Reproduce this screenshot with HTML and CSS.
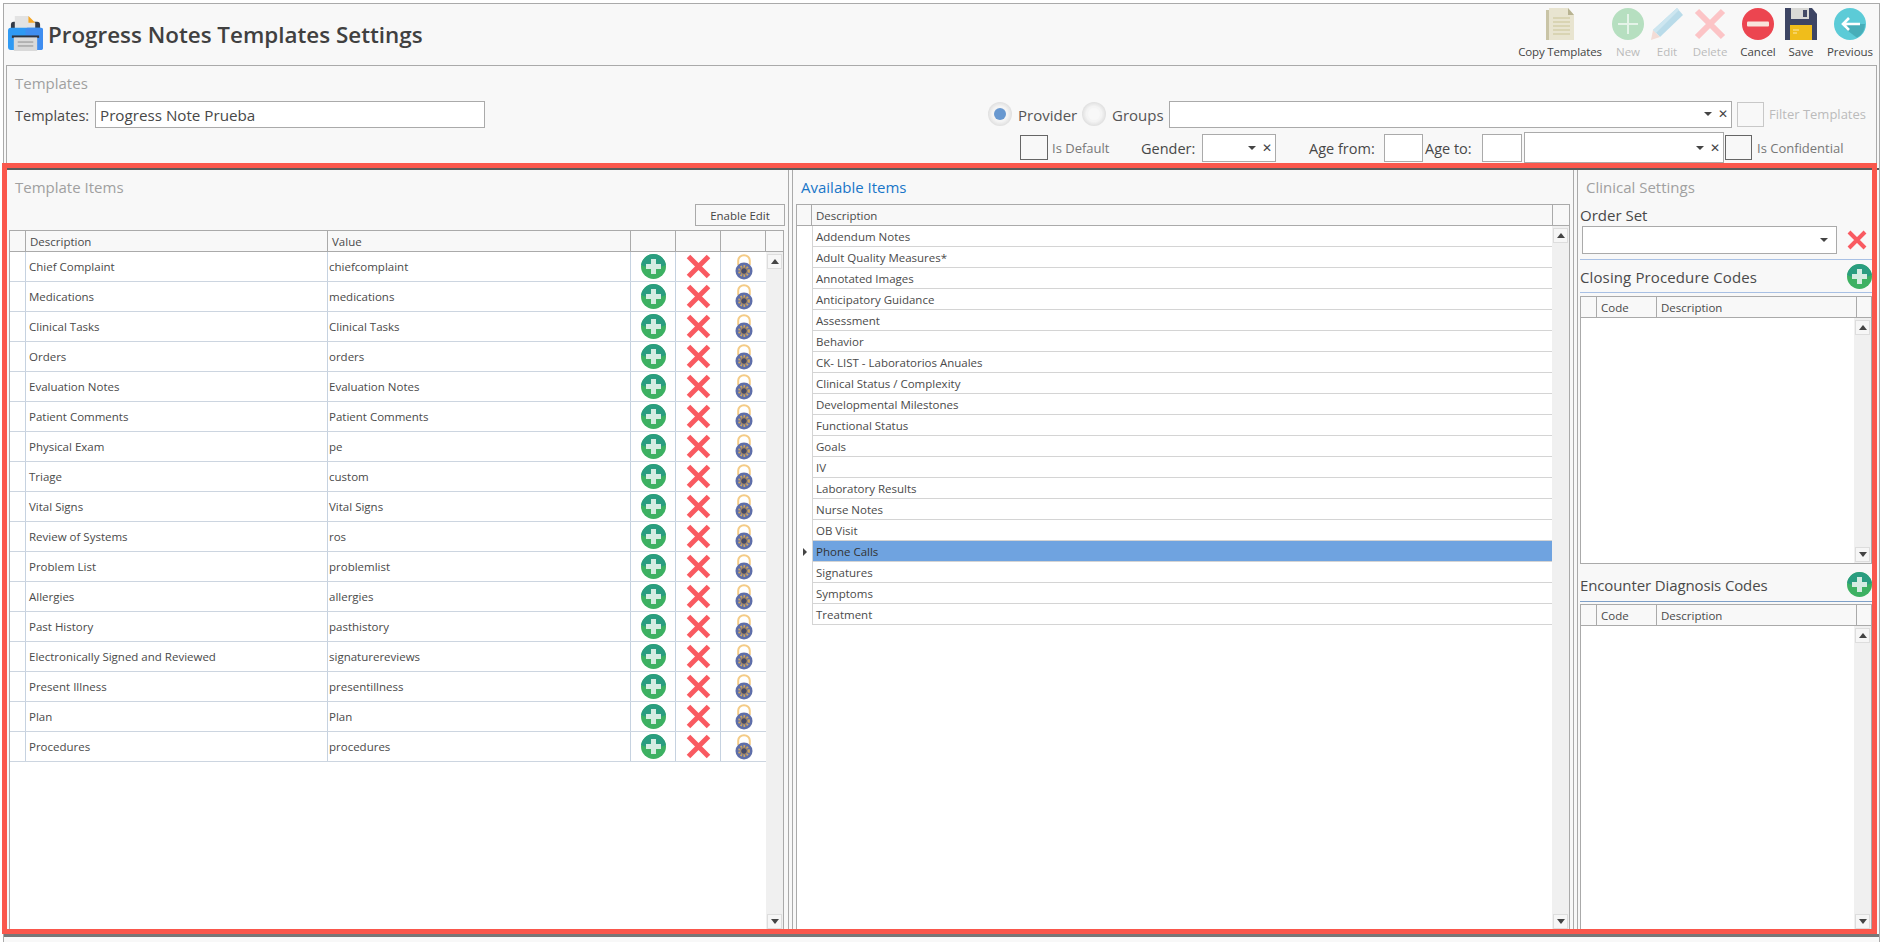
FILE: index.html
```html
<!DOCTYPE html>
<html lang="en">
<head>
<meta charset="utf-8">
<title>Progress Notes Templates Settings</title>
<link rel="stylesheet" href="styles.css">
</head>
<body>
<svg class="defs" width="0" height="0" aria-hidden="true">
  <defs>
    <symbol id="i-plus" viewBox="0 0 25 25">
      <circle cx="12.5" cy="12.5" r="12.5" fill="#3db162"/>
      <path d="M.1 11A12.5 12.5 0 0 1 24.9 11C20 14 5 14 .1 11Z" fill="#2a9d80"/>
      <path d="M10 5h5v5h5v5h-5v5h-5v-5H5v-5h5Z" fill="#d5ece2"/>
    </symbol>
    <symbol id="i-x" viewBox="0 0 25 25">
      <path d="M2.5 2.5 22.5 22.5M22.5 2.5 2.5 22.5" stroke="#f95a61" stroke-width="5" fill="none"/>
    </symbol>
    <symbol id="i-lock" viewBox="0 0 18 26">
      <path d="M3.2 11V6.5a5.8 5.3 0 0 1 11.6 0V11" fill="none" stroke="#f4cb86" stroke-width="2"/>
      <circle cx="9" cy="17" r="8.5" fill="#5e6ea9"/>
      <circle cx="9" cy="17" r="5" fill="none" stroke="#d1a75e" stroke-width="1.8" stroke-dasharray="1.8 1.4"/>
      <circle cx="9" cy="17" r="3.4" fill="#454b6b" stroke="#d9a85a" stroke-width=".8"/>
    </symbol>
  </defs>
</svg>

<div class="app">
  <header class="topbar">
    <div class="brand">
      <svg class="logo" viewBox="0 0 36 36">
        <path d="M3 14V9a3 3 0 0 1 3-3h24a3 3 0 0 1 3 3v5Z" fill="#333a46"/>
        <path d="M7 0h14l7 7v8H7Z" fill="#e3e3e3"/>
        <path d="M21 0l7 7h-7Z" fill="#f6a623"/>
        <rect x="0" y="12" width="36" height="23" rx="3" fill="#2f9af3"/>
        <rect x="18" y="12" width="18" height="23" rx="2" fill="#3f8df0"/>
        <rect x="4" y="20" width="28" height="2.5" fill="#2f3440"/>
        <rect x="6" y="22" width="24" height="14" fill="#d9d9d9"/>
        <rect x="10" y="26" width="16" height="1.6" fill="#a9a9a9"/>
        <rect x="10" y="30" width="16" height="1.6" fill="#a9a9a9"/>
      </svg>
      <h1 class="page-title">Progress Notes Templates Settings</h1>
    </div>
    <nav class="toolbar">
      <div class="tool tool-copy">
        <svg class="tool-icon" viewBox="0 0 32 32">
          <path d="M2 2h20v30H2Z" fill="#c9c4a6"/>
          <path d="M5 0h19l6 7v25H5Z" fill="#e8e4d0"/>
          <path d="M24 0l6 7h-6Z" fill="#b8b392"/>
          <path d="M9 10h17M9 14h17M9 18h17M9 22h17M9 26h17" stroke="#d3cea9" stroke-width="1.4"/>
        </svg>
        <span class="tool-label">Copy Templates</span>
      </div>
      <div class="tool tool-new tool-off">
        <svg class="tool-icon" viewBox="0 0 32 32">
          <circle cx="16" cy="16" r="16" fill="#b6dfc0"/>
          <path d="M16 6v20M6 16h20" stroke="#e4f3e8" stroke-width="2"/>
        </svg>
        <span class="tool-label">New</span>
      </div>
      <div class="tool tool-edit tool-off">
        <svg class="tool-icon" viewBox="0 0 32 32">
          <path d="M26 0l6 7L9 29 2 22Z" fill="#b9dbe9"/>
          <path d="M2 22l7 7-9 3Z" fill="#f3dcd6"/>
          <path d="M2 22 26 0l2 2L5 25Z" fill="#cde6f0"/>
        </svg>
        <span class="tool-label">Edit</span>
      </div>
      <div class="tool tool-delete tool-off">
        <svg class="tool-icon" viewBox="0 0 32 32">
          <path d="M3 3 29 29M29 3 3 29" stroke="#fcc4c6" stroke-width="6" fill="none"/>
        </svg>
        <span class="tool-label">Delete</span>
      </div>
      <div class="tool tool-cancel">
        <svg class="tool-icon" viewBox="0 0 32 32">
          <circle cx="16" cy="16" r="16" fill="#ec4550"/>
          <rect x="5" y="13.5" width="22" height="5" rx="1" fill="#f8e4dc"/>
        </svg>
        <span class="tool-label">Cancel</span>
      </div>
      <div class="tool tool-save">
        <svg class="tool-icon" viewBox="0 0 32 32">
          <path d="M0 0h27l5 6v26H0Z" fill="#3d4564"/>
          <path d="M6 0h18v11H6Z" fill="#d9d9d6"/>
          <rect x="18" y="2" width="4" height="7" fill="#444b66"/>
          <rect x="5" y="17" width="22" height="15" fill="#f0bd1b"/>
          <path d="M8 22h6M8 25h4" stroke="#fbe8a8" stroke-width="1.2"/>
        </svg>
        <span class="tool-label">Save</span>
      </div>
      <div class="tool tool-prev">
        <svg class="tool-icon" viewBox="0 0 32 32">
          <circle cx="16" cy="16" r="16" fill="#5ccbd7"/>
          <path d="M10 20 16 16h15a16 16 0 0 1-8 13.8Z" fill="#48aeb9"/>
          <path d="M26 16H9M15 10l-6 6 6 6" stroke="#fff" stroke-width="2.6" fill="none"/>
        </svg>
        <span class="tool-label">Previous</span>
      </div>
    </nav>
  </header>

  <section class="filters">
    <h2 class="group-title muted">Templates</h2>
    <div class="filter-row row-one">
      <label class="field-label tpl-label">Templates:</label>
      <div class="text-box tpl-name">Progress Note Prueba</div>
      <div class="row-spring"></div>
      <span class="radio radio-on"></span><span class="radio-text provider-text">Provider</span>
      <span class="radio radio-off"></span><span class="radio-text groups-text">Groups</span>
      <div class="combo combo-groups"><i class="caret"></i><i class="clear">✕</i></div>
      <span class="check check-light"></span>
      <span class="check-text filter-text">Filter Templates</span>
    </div>
    <div class="filter-row row-two">
      <div class="row-spring"></div>
      <span class="check check-dark check-wide"></span>
      <span class="check-text default-text">Is Default</span>
      <label class="field-label gender-label">Gender:</label>
      <div class="combo combo-gender"><i class="caret"></i><i class="clear">✕</i></div>
      <label class="field-label agefrom-label">Age from:</label>
      <div class="text-box age-from"></div>
      <label class="field-label ageto-label">Age to:</label>
      <div class="text-box age-to"></div>
      <div class="combo combo-age"><i class="caret"></i><i class="clear">✕</i></div>
      <span class="check check-dark"></span>
      <span class="check-text conf-text">Is Confidential</span>
    </div>
  </section>

  <main class="workspace">
    <section class="panel panel-items">
      <h2 class="group-title muted">Template Items</h2>
      <div class="button-row"><button class="btn" type="button">Enable Edit</button></div>
      <div class="grid grid-items">
        <div class="grid-head">
          <span class="hc hc-ind"></span><span class="hc hc-desc">Description</span><span class="hc hc-val">Value</span>
          <span class="hc hc-ic"></span><span class="hc hc-ic"></span><span class="hc hc-ic"></span><span class="hc hc-end"></span>
        </div>
        <div class="grid-body">
          <div class="rows">
            <div class="item-row"><span class="c-ind"></span><span class="c-desc">Chief Complaint</span><span class="c-val">chiefcomplaint</span><span class="c-ic"><svg class="ic-plus"><use href="#i-plus"/></svg></span><span class="c-ic"><svg class="ic-x"><use href="#i-x"/></svg></span><span class="c-ic"><svg class="ic-lock"><use href="#i-lock"/></svg></span></div>
            <div class="item-row"><span class="c-ind"></span><span class="c-desc">Medications</span><span class="c-val">medications</span><span class="c-ic"><svg class="ic-plus"><use href="#i-plus"/></svg></span><span class="c-ic"><svg class="ic-x"><use href="#i-x"/></svg></span><span class="c-ic"><svg class="ic-lock"><use href="#i-lock"/></svg></span></div>
            <div class="item-row"><span class="c-ind"></span><span class="c-desc">Clinical Tasks</span><span class="c-val">Clinical Tasks</span><span class="c-ic"><svg class="ic-plus"><use href="#i-plus"/></svg></span><span class="c-ic"><svg class="ic-x"><use href="#i-x"/></svg></span><span class="c-ic"><svg class="ic-lock"><use href="#i-lock"/></svg></span></div>
            <div class="item-row"><span class="c-ind"></span><span class="c-desc">Orders</span><span class="c-val">orders</span><span class="c-ic"><svg class="ic-plus"><use href="#i-plus"/></svg></span><span class="c-ic"><svg class="ic-x"><use href="#i-x"/></svg></span><span class="c-ic"><svg class="ic-lock"><use href="#i-lock"/></svg></span></div>
            <div class="item-row"><span class="c-ind"></span><span class="c-desc">Evaluation Notes</span><span class="c-val">Evaluation Notes</span><span class="c-ic"><svg class="ic-plus"><use href="#i-plus"/></svg></span><span class="c-ic"><svg class="ic-x"><use href="#i-x"/></svg></span><span class="c-ic"><svg class="ic-lock"><use href="#i-lock"/></svg></span></div>
            <div class="item-row"><span class="c-ind"></span><span class="c-desc">Patient Comments</span><span class="c-val">Patient Comments</span><span class="c-ic"><svg class="ic-plus"><use href="#i-plus"/></svg></span><span class="c-ic"><svg class="ic-x"><use href="#i-x"/></svg></span><span class="c-ic"><svg class="ic-lock"><use href="#i-lock"/></svg></span></div>
            <div class="item-row"><span class="c-ind"></span><span class="c-desc">Physical Exam</span><span class="c-val">pe</span><span class="c-ic"><svg class="ic-plus"><use href="#i-plus"/></svg></span><span class="c-ic"><svg class="ic-x"><use href="#i-x"/></svg></span><span class="c-ic"><svg class="ic-lock"><use href="#i-lock"/></svg></span></div>
            <div class="item-row"><span class="c-ind"></span><span class="c-desc">Triage</span><span class="c-val">custom</span><span class="c-ic"><svg class="ic-plus"><use href="#i-plus"/></svg></span><span class="c-ic"><svg class="ic-x"><use href="#i-x"/></svg></span><span class="c-ic"><svg class="ic-lock"><use href="#i-lock"/></svg></span></div>
            <div class="item-row"><span class="c-ind"></span><span class="c-desc">Vital Signs</span><span class="c-val">Vital Signs</span><span class="c-ic"><svg class="ic-plus"><use href="#i-plus"/></svg></span><span class="c-ic"><svg class="ic-x"><use href="#i-x"/></svg></span><span class="c-ic"><svg class="ic-lock"><use href="#i-lock"/></svg></span></div>
            <div class="item-row"><span class="c-ind"></span><span class="c-desc">Review of Systems</span><span class="c-val">ros</span><span class="c-ic"><svg class="ic-plus"><use href="#i-plus"/></svg></span><span class="c-ic"><svg class="ic-x"><use href="#i-x"/></svg></span><span class="c-ic"><svg class="ic-lock"><use href="#i-lock"/></svg></span></div>
            <div class="item-row"><span class="c-ind"></span><span class="c-desc">Problem List</span><span class="c-val">problemlist</span><span class="c-ic"><svg class="ic-plus"><use href="#i-plus"/></svg></span><span class="c-ic"><svg class="ic-x"><use href="#i-x"/></svg></span><span class="c-ic"><svg class="ic-lock"><use href="#i-lock"/></svg></span></div>
            <div class="item-row"><span class="c-ind"></span><span class="c-desc">Allergies</span><span class="c-val">allergies</span><span class="c-ic"><svg class="ic-plus"><use href="#i-plus"/></svg></span><span class="c-ic"><svg class="ic-x"><use href="#i-x"/></svg></span><span class="c-ic"><svg class="ic-lock"><use href="#i-lock"/></svg></span></div>
            <div class="item-row"><span class="c-ind"></span><span class="c-desc">Past History</span><span class="c-val">pasthistory</span><span class="c-ic"><svg class="ic-plus"><use href="#i-plus"/></svg></span><span class="c-ic"><svg class="ic-x"><use href="#i-x"/></svg></span><span class="c-ic"><svg class="ic-lock"><use href="#i-lock"/></svg></span></div>
            <div class="item-row"><span class="c-ind"></span><span class="c-desc">Electronically Signed and Reviewed</span><span class="c-val">signaturereviews</span><span class="c-ic"><svg class="ic-plus"><use href="#i-plus"/></svg></span><span class="c-ic"><svg class="ic-x"><use href="#i-x"/></svg></span><span class="c-ic"><svg class="ic-lock"><use href="#i-lock"/></svg></span></div>
            <div class="item-row"><span class="c-ind"></span><span class="c-desc">Present Illness</span><span class="c-val">presentillness</span><span class="c-ic"><svg class="ic-plus"><use href="#i-plus"/></svg></span><span class="c-ic"><svg class="ic-x"><use href="#i-x"/></svg></span><span class="c-ic"><svg class="ic-lock"><use href="#i-lock"/></svg></span></div>
            <div class="item-row"><span class="c-ind"></span><span class="c-desc">Plan</span><span class="c-val">Plan</span><span class="c-ic"><svg class="ic-plus"><use href="#i-plus"/></svg></span><span class="c-ic"><svg class="ic-x"><use href="#i-x"/></svg></span><span class="c-ic"><svg class="ic-lock"><use href="#i-lock"/></svg></span></div>
            <div class="item-row"><span class="c-ind"></span><span class="c-desc">Procedures</span><span class="c-val">procedures</span><span class="c-ic"><svg class="ic-plus"><use href="#i-plus"/></svg></span><span class="c-ic"><svg class="ic-x"><use href="#i-x"/></svg></span><span class="c-ic"><svg class="ic-lock"><use href="#i-lock"/></svg></span></div>
          </div>
          <div class="vscroll"><span class="sb-btn sb-up"></span><span class="sb-btn sb-down"></span></div>
        </div>
      </div>
    </section>

    <section class="panel panel-avail">
      <h2 class="group-title accent">Available Items</h2>
      <div class="grid grid-avail">
        <div class="grid-head">
          <span class="hc av-ind"></span><span class="hc av-desc">Description</span><span class="hc av-end"></span>
        </div>
        <div class="grid-body">
          <div class="rows">
            <div class="av-row"><span class="av-mark"></span><span class="av-cell">Addendum Notes</span></div>
            <div class="av-row"><span class="av-mark"></span><span class="av-cell">Adult Quality Measures*</span></div>
            <div class="av-row"><span class="av-mark"></span><span class="av-cell">Annotated Images</span></div>
            <div class="av-row"><span class="av-mark"></span><span class="av-cell">Anticipatory Guidance</span></div>
            <div class="av-row"><span class="av-mark"></span><span class="av-cell">Assessment</span></div>
            <div class="av-row"><span class="av-mark"></span><span class="av-cell">Behavior</span></div>
            <div class="av-row"><span class="av-mark"></span><span class="av-cell">CK- LIST - Laboratorios Anuales</span></div>
            <div class="av-row"><span class="av-mark"></span><span class="av-cell">Clinical Status / Complexity</span></div>
            <div class="av-row"><span class="av-mark"></span><span class="av-cell">Developmental Milestones</span></div>
            <div class="av-row"><span class="av-mark"></span><span class="av-cell">Functional Status</span></div>
            <div class="av-row"><span class="av-mark"></span><span class="av-cell">Goals</span></div>
            <div class="av-row"><span class="av-mark"></span><span class="av-cell">IV</span></div>
            <div class="av-row"><span class="av-mark"></span><span class="av-cell">Laboratory Results</span></div>
            <div class="av-row"><span class="av-mark"></span><span class="av-cell">Nurse Notes</span></div>
            <div class="av-row"><span class="av-mark"></span><span class="av-cell">OB Visit</span></div>
            <div class="av-row av-selected"><span class="av-mark"><i class="row-arrow"></i></span><span class="av-cell">Phone Calls</span></div>
            <div class="av-row"><span class="av-mark"></span><span class="av-cell">Signatures</span></div>
            <div class="av-row"><span class="av-mark"></span><span class="av-cell">Symptoms</span></div>
            <div class="av-row"><span class="av-mark"></span><span class="av-cell">Treatment</span></div>
          </div>
          <div class="vscroll"><span class="sb-btn sb-up"></span><span class="sb-btn sb-down"></span></div>
        </div>
      </div>
    </section>

    <section class="panel panel-clinical">
      <h2 class="group-title muted">Clinical Settings</h2>
      <div class="order-label">Order Set</div>
      <div class="order-row">
        <div class="combo combo-order"><i class="caret"></i></div>
        <svg class="order-x"><use href="#i-x"/></svg>
      </div>
      <div class="code-head head-closing"><span class="code-title">Closing Procedure Codes</span><svg class="ic-plus"><use href="#i-plus"/></svg></div>
      <div class="grid grid-codes grid-closing">
        <div class="grid-head">
          <span class="hc cd-ind"></span><span class="hc cd-code">Code</span><span class="hc cd-desc">Description</span><span class="hc cd-end"></span>
        </div>
        <div class="grid-body">
          <div class="rows"></div>
          <div class="vscroll"><span class="sb-btn sb-up"></span><span class="sb-btn sb-down"></span></div>
        </div>
      </div>
      <div class="code-head head-encounter"><span class="code-title">Encounter Diagnosis Codes</span><svg class="ic-plus"><use href="#i-plus"/></svg></div>
      <div class="grid grid-codes grid-encounter">
        <div class="grid-head">
          <span class="hc cd-ind"></span><span class="hc cd-code">Code</span><span class="hc cd-desc">Description</span><span class="hc cd-end"></span>
        </div>
        <div class="grid-body">
          <div class="rows"></div>
          <div class="vscroll"><span class="sb-btn sb-up"></span><span class="sb-btn sb-down"></span></div>
        </div>
      </div>
    </section>
  </main>
</div>
<div class="highlight"></div>
</body>
</html>
```

FILE: styles.css
```css
* { box-sizing: border-box; }
html, body { margin: 0; padding: 0; }
body {
  width: 1886px;
  height: 942px;
  overflow: hidden;
  position: relative;
  background: #fff;
  font-family: "Open Sans", "Noto Sans", sans-serif;
  color: #444;
}
.defs { position: absolute; }

.app {
  margin: 3px 0 0 3px;
  width: 1877px;
  height: 939px;
  border: 1px solid #aaa;
  border-bottom: 0;
  background: #f8f8f8;
  display: flex;
  flex-direction: column;
}

/* top bar */
.topbar {
  height: 61px;
  flex: none;
  display: flex;
  justify-content: space-between;
  padding-left: 4px;
}
.brand { display: flex; align-items: center; gap: 5px; height: 61px; }
.logo { width: 35px; height: 35px; margin-bottom: 3px; }
.page-title { margin: 0; font-size: 22.4px; font-weight: 600; color: #404040; white-space: nowrap; }
.toolbar { display: flex; align-items: flex-start; }
.tool {
  display: flex;
  flex-direction: column;
  align-items: center;
  padding-top: 4px;
  flex: none;
}
.tool-icon { width: 32px; height: 32px; flex: none; }
.tool-label { font-size: 11.5px; line-height: 16px; margin-top: 4px; color: #444; white-space: nowrap; }
.tool-off .tool-label { color: #bbb; }
.tool-copy { width: 92px; }
.tool-copy .tool-label { letter-spacing: -.15px; }
.tool-new { width: 44px; }
.tool-edit { width: 34px; }
.tool-delete { width: 52px; }
.tool-cancel { width: 44px; }
.tool-save { width: 42px; }
.tool-prev { width: 56px; margin-right: 1px; }

/* filters group */
.filters {
  flex: none;
  height: 103px;
  margin: 0 2px;
  border: 1px solid #aaa;
  border-bottom: 0;
  padding: 0 0 0 8px;
  display: flex;
  flex-direction: column;
}
.group-title { margin: 0; font-weight: 400; font-size: 15px; line-height: 20px; }
.muted { color: #a0a0a0; }
.accent { color: #1976c8; }
.filters > .group-title { padding-top: 7px; height: 35px; }
.filter-row { display: flex; align-items: center; flex: none; }
.row-one { height: 26px; }
.row-two { height: 29px; margin-top: 6px; }
.row-spring { flex: 1; }
.field-label { font-size: 14.5px; color: #484848; white-space: nowrap; padding-top: 1px; }
.text-box { background: #fff; border: 1px solid #aaa; color: #484848; flex: none; }
.tpl-label { width: 80px; padding-top: 2px; }
.tpl-name { width: 390px; height: 27px; padding: 3px 4px 0; font-size: 15.2px; line-height: 21px; white-space: nowrap; }
.radio { width: 24px; height: 24px; border-radius: 50%; background: radial-gradient(circle, #f4f4f4 45%, #dcdcdc 75%, #ececec); display: flex; flex: none; }
.radio-on::after { content: ""; width: 12px; height: 12px; border-radius: 50%; background: #6898d0; margin: auto; }
.radio-off::after { content: ""; width: 12px; height: 12px; border-radius: 50%; background: #f8f8f8; margin: auto; }
.radio-text { font-size: 15px; color: #555; flex: none; white-space: nowrap; margin-left: 6px; padding-top: 2px; }
.provider-text { width: 64px; }
.groups-text { width: 57px; }
.combo { background: #fff; border: 1px solid #aaa; display: flex; align-items: center; justify-content: flex-end; flex: none; }
.caret { width: 0; height: 0; border: 4px solid transparent; border-top: 4px solid #444; border-bottom: 0; }
.clear { font-style: normal; font-size: 12px; line-height: 12px; color: #444; margin: 0 3px 0 6px; width: 10px; text-align: center; font-family: "DejaVu Sans", sans-serif; }
.combo-groups { width: 563px; height: 27px; }
.check { width: 27px; height: 25px; flex: none; background: #f8f8f8; }
.check-light { border: 1px solid #c8c8c8; margin-left: 5px; }
.check-dark { border: 1px solid #666; }
.check-wide { width: 28px; }
.check-text { font-size: 13px; color: #777; margin-left: 5px; white-space: nowrap; flex: none; }
.filter-text { color: #bbb; width: 107px; }
.default-text { width: 89px; margin-left: 4px; }
.gender-label { width: 61px; }
.combo-gender { width: 74px; height: 28px; }
.agefrom-label { width: 75px; margin-left: 33px; }
.age-from { width: 39px; height: 28px; }
.ageto-label { width: 57px; margin-left: 2px; }
.age-to { width: 40px; height: 28px; }
.combo-age { width: 200px; height: 31px; margin-left: 2px; margin-right: 1px; }
.conf-text { width: 119px; }

/* workspace */
.workspace {
  flex: none;
  height: 769px;
  border-top: 2px solid #5a5a5a;
  border-bottom: 3px solid #777;
  display: flex;
  gap: 3px;
}
.panel { display: flex; flex-direction: column; min-height: 0; height: 764px; flex: none; }
.panel > .group-title { height: 34px; padding-top: 7px; }
.panel-items { width: 785px; padding-left: 5px; padding-right: 4px; border-right: 1px solid #aaa; }
.panel-items > .group-title { padding-left: 6px; }
.button-row { display: flex; justify-content: flex-end; height: 26px; flex: none; }
.btn { width: 90px; height: 22px; margin-right: -1px; border: 1px solid #aaa; background: #f8f8f8; font: 11.5px "Open Sans", sans-serif; color: #444; padding: 0; }
.panel-avail { width: 782px; padding-left: 3px; padding-right: 3px; border-left: 1px solid #aaa; border-right: 1px solid #aaa; }
.panel-avail > .group-title { padding-left: 5px; }
.panel-clinical { width: 302px; padding-left: 2px; border-left: 1px solid #aaa; }
.panel-clinical > .group-title { padding-left: 6px; height: 33px; }

/* grids */
.grid { border: 1px solid #aaa; border-bottom: 0; flex: 1; min-height: 0; display: flex; flex-direction: column; background: #fff; }
.grid-head { display: flex; flex: none; height: 21px; background: #f8f8f8; border-bottom: 1px solid #aaa; }
.hc { font-size: 11.5px; line-height: 21px; color: #4a4a4a; padding-left: 4px; border-right: 1px solid #aaa; flex: none; }
.hc:last-child { border-right: 0; flex: 1; }
.hc-ind { width: 16px; }
.hc-desc { width: 302px; }
.hc-val { width: 303px; }
.hc-ic { width: 45px; }
.grid-body { flex: 1; min-height: 0; display: flex; }
.rows { flex: 1; min-width: 0; }
.vscroll { width: 17px; flex: none; background: #f0f0f0; display: flex; flex-direction: column; justify-content: space-between; padding: 2px 1px 5px; }
.grid-closing .vscroll { padding-bottom: 1px; }
.sb-btn { width: 15px; height: 15px; background: #f6f6f6; border: 1px solid #ddd; display: flex; }
.sb-btn::after { content: ""; margin: auto; border: 4px solid transparent; }
.sb-up::after { border-bottom: 5px solid #444; border-top: 0; }
.sb-down::after { border-top: 5px solid #444; border-bottom: 0; }

.item-row { display: flex; height: 30px; border-bottom: 1px solid #ccd5e0; font-size: 11.5px; color: #4a4a4a; }
.item-row > span { flex: none; display: flex; align-items: center; border-right: 1px solid #c6d2e0; white-space: nowrap; }
.item-row > span:last-child { border-right: 0; }
.c-ind { width: 16px; }
.c-desc { width: 302px; padding-left: 3px; }
.c-val { width: 303px; padding-left: 1px; }
.c-ic { width: 45px; justify-content: center; }
.ic-plus { width: 25px; height: 25px; display: block; flex: none; }
.ic-x { width: 25px; height: 25px; display: block; }
.ic-lock { width: 18px; height: 26px; display: block; }

.av-ind { width: 15px; }
.av-desc { width: 741px; }
.av-row { display: flex; height: 21px; font-size: 11.5px; color: #4a4a4a; }
.av-mark { width: 15px; flex: none; display: flex; align-items: center; justify-content: center; }
.av-cell { flex: 1; border-left: 1px solid #d4d4d4; border-bottom: 1px solid #d4d4d4; padding-left: 3px; line-height: 22px; }
.av-selected .av-cell { background: #6fa3e0; color: #333; }
.row-arrow { border: 4px solid transparent; border-left: 4px solid #444; border-right: 0; }

/* clinical */
.order-label { font-size: 15px; line-height: 20px; height: 23px; color: #484848; padding-top: 2px; }
.order-row { display: flex; align-items: center; height: 29px; padding-left: 2px; padding-bottom: 1px; }
.combo-order { width: 255px; height: 28px; padding-right: 8px; }
.order-x { width: 20px; height: 20px; margin-left: 10px; }
.code-head { display: flex; align-items: center; justify-content: space-between; width: 292px; flex: none; }
.code-title { font-size: 15px; color: #4a4a4a; padding-top: 1px; }
.head-closing .code-title { letter-spacing: .12px; }
.head-encounter .code-title { letter-spacing: -.12px; }
.head-closing { height: 34px; margin-top: 4px; border-top: 1px solid #a8c0e4; border-bottom: 1px solid #a8c0e4; }
.head-encounter { height: 34px; margin-top: 4px; border-bottom: 1px solid #7fa0c8; }
.grid-codes { width: 292px; }
.grid-closing { flex: none; height: 268px; margin-top: 3px; border-bottom: 1px solid #aaa; }
.grid-encounter { flex: 1; margin-top: 2px; }
.cd-ind { width: 16px; }
.cd-code { width: 60px; }
.cd-desc { width: 200px; }

/* red review outline */
.highlight {
  position: absolute;
  left: 2px;
  top: 163px;
  width: 1875px;
  height: 771px;
  border: 5px solid #fa574c;
  pointer-events: none;
}
```
